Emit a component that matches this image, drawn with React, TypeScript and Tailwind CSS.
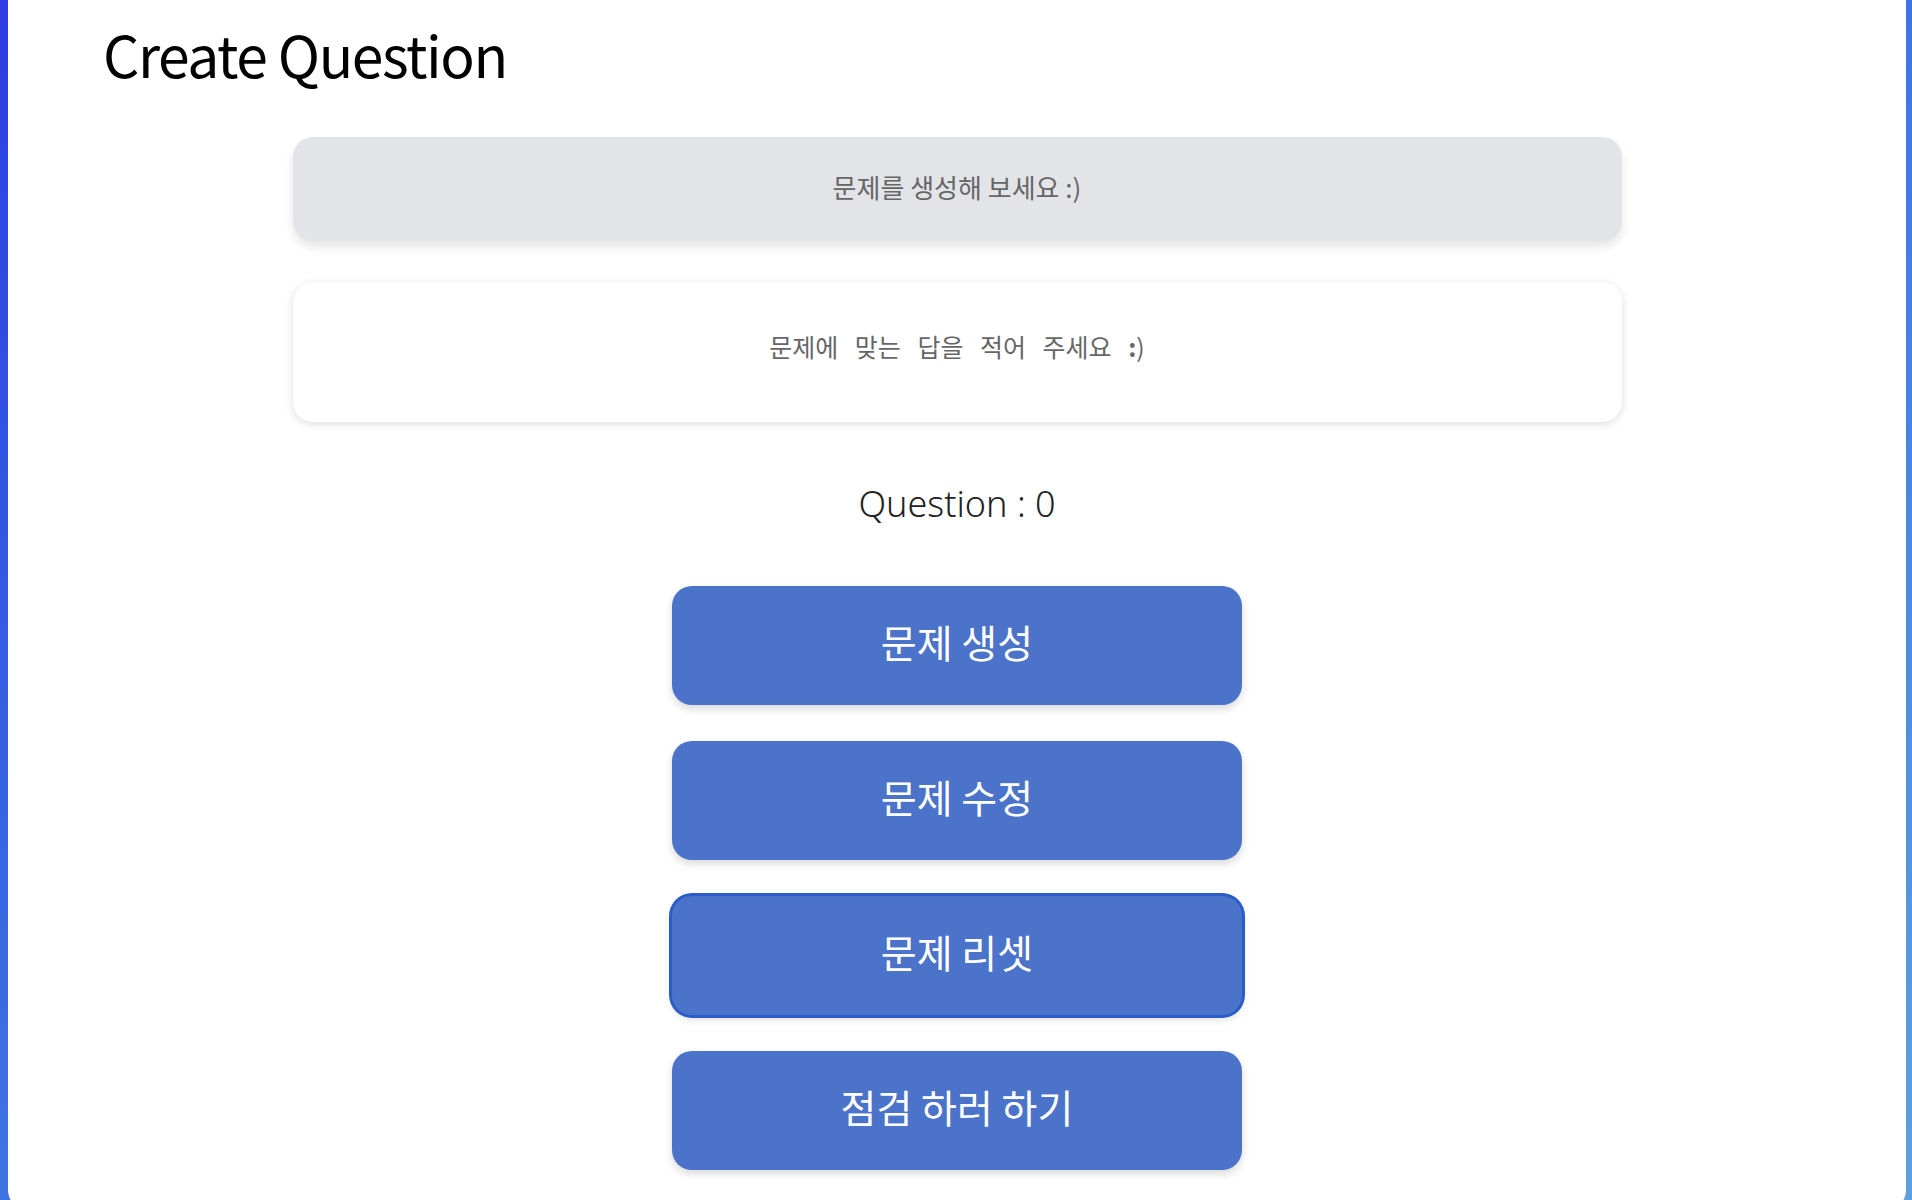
import React from "react";

const buttons = ["문제 생성", "문제 수정", "문제 리셋", "점검 하러 하기"];

export default function App() {
  return (
    <div className="h-screen overflow-hidden bg-linear-to-br from-[#2e3be0] to-[#5fa0e0] pl-[8px] pr-[6px]">
      <div className="h-[1210px] rounded-b-[20px] bg-white font-['Noto_Sans','Noto_Sans_CJK_KR',sans-serif]">
        {/* header */}
        <div className="flex h-[112px] items-center pb-[5px] pl-[95px]">
          <h1 className="font-['Noto_Sans_CJK_KR',sans-serif] text-[57px] leading-none font-normal tracking-tight text-black">
            Create Question
          </h1>
        </div>

        <div className="flex flex-col items-center pt-[25px]">
          {/* question display */}
          <div className="flex h-[104px] w-[1329px] items-center justify-center rounded-[20px] bg-[#e2e4e8] pb-[5px] shadow-[0_6px_10px_rgba(0,0,0,0.1)]">
            <p className="font-['Noto_Sans_CJK_KR',sans-serif] text-[26px] text-[#666]">문제를 생성해 보세요 :)</p>
          </div>

          {/* answer input */}
          <div className="mt-[41px] flex h-[140px] w-[1329px] items-center justify-center rounded-[20px] bg-white pb-[10px] shadow-[0_2px_8px_rgba(0,0,0,0.14)]">
            <p className="font-['Noto_Sans_CJK_KR',sans-serif] text-[25px] text-[#666] [word-spacing:11px]">
              문제에 맞는 답을 적어 주세요 <span className="font-bold">:</span>)
            </p>
          </div>

          <div className="flex h-[164px] items-center justify-center">
            <span className="text-[36px] font-light text-[#222]">Question : 0</span>
          </div>

          {/* actions */}
          <div className="flex flex-col gap-[36px]">
            {buttons.map((label, i) => (
              <button
                key={label}
                className={`flex h-[119px] w-[570px] items-center justify-center rounded-[20px] bg-[#4b73ca] pb-[8px] font-['Noto_Sans_CJK_KR',sans-serif] text-[39px] font-normal text-white shadow-[0_4px_8px_rgba(0,0,0,0.15)] ${
                  i === 2 ? "ring-[3px] ring-[#2b5dc8]" : ""
                }`}
              >
                {label}
              </button>
            ))}
          </div>
        </div>
      </div>
    </div>
  );
}
